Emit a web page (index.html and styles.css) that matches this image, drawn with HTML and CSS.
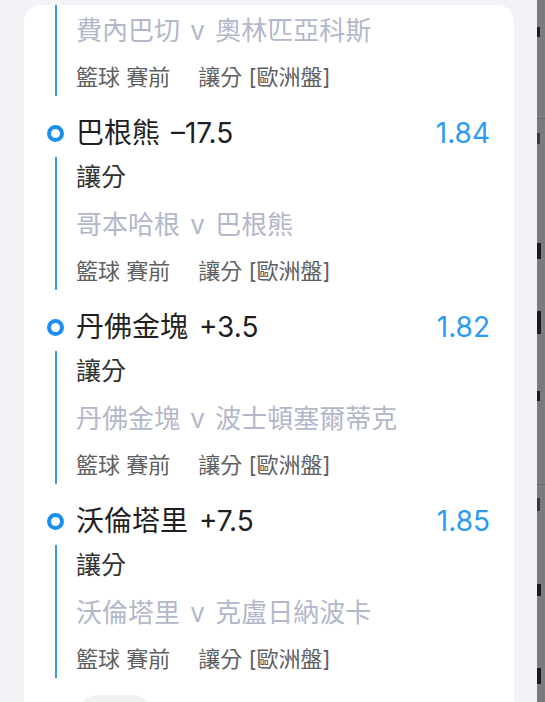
FILE: index.html
```html
<!DOCTYPE html>
<html lang="zh-Hant">
<head>
  <meta charset="UTF-8">
  <title>注單詳情</title>
  <link rel="stylesheet" href="styles.css">
</head>
<body>
  <div class="screen">
    <div class="card">
      <div class="pick pick-cut">
        <div class="pick-body">
          <div class="pick-match">費內巴切 v 奧林匹亞科斯</div>
          <div class="pick-meta"><span>籃球 賽前</span><span class="meta-type">讓分 [歐洲盤]</span></div>
        </div>
      </div>
      <div class="pick">
        <div class="pick-head"><span class="dot"></span><span class="pick-name">巴根熊 –17.5</span><span class="pick-odds">1.84</span></div>
        <div class="pick-body">
          <div class="pick-market">讓分</div>
          <div class="pick-match">哥本哈根 v 巴根熊</div>
          <div class="pick-meta"><span>籃球 賽前</span><span class="meta-type">讓分 [歐洲盤]</span></div>
        </div>
      </div>
      <div class="pick">
        <div class="pick-head"><span class="dot"></span><span class="pick-name">丹佛金塊 +3.5</span><span class="pick-odds">1.82</span></div>
        <div class="pick-body">
          <div class="pick-market">讓分</div>
          <div class="pick-match">丹佛金塊 v 波士頓塞爾蒂克</div>
          <div class="pick-meta"><span>籃球 賽前</span><span class="meta-type">讓分 [歐洲盤]</span></div>
        </div>
      </div>
      <div class="pick">
        <div class="pick-head"><span class="dot"></span><span class="pick-name">沃倫塔里 +7.5</span><span class="pick-odds">1.85</span></div>
        <div class="pick-body">
          <div class="pick-market">讓分</div>
          <div class="pick-match">沃倫塔里 v 克盧日納波卡</div>
          <div class="pick-meta"><span>籃球 賽前</span><span class="meta-type">讓分 [歐洲盤]</span></div>
        </div>
      </div>
      <div class="more-btn"></div>
    </div>
  </div>
  <div class="behind">
    <div class="mark m1"></div>
    <div class="rule r1"></div>
    <div class="mark m2"></div>
    <div class="mark m3"></div>
    <div class="mark m4"></div>
    <div class="mark m5"></div>
    <div class="rule r2"></div>
    <div class="mark m6"></div>
    <div class="mark m7"></div>
    <div class="mark m8"></div>
  </div>
</body>
</html>
```

FILE: styles.css
```css
body { margin: 0; display: flex; height: 702px; overflow: hidden; background: #f2f2f7; font-family: "Inter", "Noto Sans CJK TC", sans-serif; }
.screen { flex: 1; padding: 5px 23px 0 24px; display: flex; flex-direction: column; }
.card { flex: 1; background: #fff; border-radius: 16px 16px 0 0; padding: 0 24px 0 23px; overflow: hidden; }

.pick { margin-top: 19px; }
.pick-head { display: flex; align-items: center; height: 36px; gap: 12px; }
.dot { width: 17px; height: 17px; box-sizing: border-box; border: 4px solid #1b8ff0; border-radius: 50%; flex: none; }
.pick-name { font-size: 28px; color: #1f1f22; line-height: 36px; word-spacing: 3px; }
.pick-odds { margin-left: auto; font-size: 28px; color: #2b9bf2; line-height: 36px; }

.pick-body { margin: 6px 0 0 8px; padding-left: 19px; border-left: 2px solid #3a97d6; }
.pick-cut { margin-top: 0; }
.pick-cut .pick-body { margin-top: -2px; }
.pick-market, .pick-match, .pick-meta { white-space: nowrap; }
.pick-market { font-size: 25px; color: #333; height: 40px; line-height: 40px; }
.pick-match { font-size: 26px; color: #b3b7ca; height: 56px; line-height: 56px; word-spacing: 3px; }
.pick-meta { font-size: 22px; color: #5f5f62; height: 37px; line-height: 37px; }
.meta-type { margin-left: 28px; }

.more-btn { margin: 17px 0 0 31px; width: 75px; height: 40px; border-radius: 20px; background: #f1f1f4; }

.behind { width: 8px; background: #7b7b7b; }
.mark { width: 3px; background: #1c1c1c; }
.rule { height: 1px; background: #6a6a6a; }
.m1 { margin-top: 27px; height: 10px; }
.r1 { margin-top: 81px; }
.m2 { margin-top: 14px; height: 11px; background: #3a3a3a; }
.m3 { margin-top: 99px; height: 16px; width: 4px; }
.m4 { margin-top: 52px; height: 23px; width: 4px; }
.m5 { margin-top: 57px; height: 10px; }
.r2 { margin-top: 83px; }
.m6 { margin-top: 13px; height: 13px; background: #3a3a3a; }
.m7 { margin-top: 73px; height: 12px; width: 4px; }
.m8 { margin-top: 72px; height: 16px; width: 4px; }
```
